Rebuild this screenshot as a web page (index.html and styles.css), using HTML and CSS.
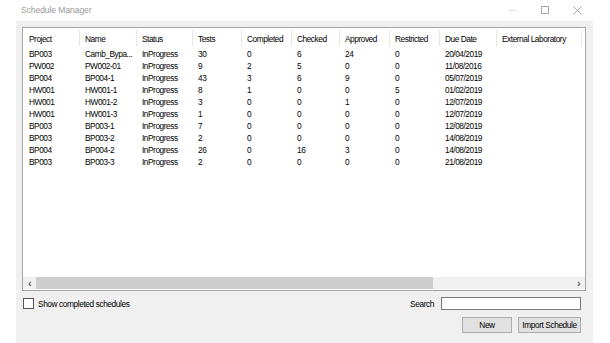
FILE: index.html
```html
<!DOCTYPE html>
<html lang="en">
<head>
  <meta charset="UTF-8" />
  <title>Schedule Manager</title>
  <link rel="stylesheet" href="styles.css">
</head>
<body>
  <div class="titlebar">
    <span class="title">Schedule Manager</span>
    <div class="controls">
      <span class="ctl min"></span>
      <span class="ctl max"></span>
      <svg class="ctl close" width="9" height="9" viewBox="0 0 9 9"><path d="M0.5 0.5L8.5 8.5M8.5 0.5L0.5 8.5" stroke="#9a9a9a" stroke-width="0.9" fill="none"/></svg>
    </div>
  </div>

  <div class="client">
    <div class="listview">
      <div class="row head">
        <span>Project</span><span>Name</span><span>Status</span><span>Tests</span><span>Completed</span><span>Checked</span><span>Approved</span><span>Restricted</span><span>Due Date</span><span>External Laboratory</span>
      </div>
      <div class="rows">
        <div class="row"><span>BP003</span><span>Camb_Bypa...</span><span>InProgress</span><span>30</span><span>0</span><span>6</span><span>24</span><span>0</span><span>20/04/2019</span><span></span></div>
        <div class="row"><span>PW002</span><span>PW002-01</span><span>InProgress</span><span>9</span><span>2</span><span>5</span><span>0</span><span>0</span><span>11/08/2016</span><span></span></div>
        <div class="row"><span>BP004</span><span>BP004-1</span><span>InProgress</span><span>43</span><span>3</span><span>6</span><span>9</span><span>0</span><span>05/07/2019</span><span></span></div>
        <div class="row"><span>HW001</span><span>HW001-1</span><span>InProgress</span><span>8</span><span>1</span><span>0</span><span>0</span><span>5</span><span>01/02/2019</span><span></span></div>
        <div class="row"><span>HW001</span><span>HW001-2</span><span>InProgress</span><span>3</span><span>0</span><span>0</span><span>1</span><span>0</span><span>12/07/2019</span><span></span></div>
        <div class="row"><span>HW001</span><span>HW001-3</span><span>InProgress</span><span>1</span><span>0</span><span>0</span><span>0</span><span>0</span><span>12/07/2019</span><span></span></div>
        <div class="row"><span>BP003</span><span>BP003-1</span><span>InProgress</span><span>7</span><span>0</span><span>0</span><span>0</span><span>0</span><span>12/08/2019</span><span></span></div>
        <div class="row"><span>BP003</span><span>BP003-2</span><span>InProgress</span><span>2</span><span>0</span><span>0</span><span>0</span><span>0</span><span>14/08/2019</span><span></span></div>
        <div class="row"><span>BP004</span><span>BP004-2</span><span>InProgress</span><span>26</span><span>0</span><span>16</span><span>3</span><span>0</span><span>14/08/2019</span><span></span></div>
        <div class="row"><span>BP003</span><span>BP003-3</span><span>InProgress</span><span>2</span><span>0</span><span>0</span><span>0</span><span>0</span><span>21/08/2019</span><span></span></div>
      </div>
      <div class="hscroll">
        <span class="arrow">&lsaquo;</span>
        <div class="track"><div class="thumb"></div></div>
        <span class="arrow">&rsaquo;</span>
      </div>
    </div>

    <div class="options">
      <label class="check"><span class="box"></span>Show completed schedules</label>
      <div class="search">
        <span>Search</span>
        <span class="field"></span>
      </div>
    </div>

    <div class="actions">
      <button class="btn new">New</button>
      <button class="btn">Import Schedule</button>
    </div>
    <div class="grip"></div>
  </div>
</body>
</html>
```

FILE: styles.css
```css
* {
  box-sizing: border-box;
}

body {
  margin: 0;
  background: #ffffff;
  font-family: 'Liberation Sans', Arial, sans-serif;
  height: 343px;
  overflow: hidden;
  display: flex;
  flex-direction: column;
}

.titlebar {
  height: 21px;
  display: flex;
  align-items: center;
  justify-content: space-between;
  padding: 0 0 1px 21px;
}

.title {
  font-size: 8.6px;
  color: #9a9a9a;
  letter-spacing: -0.1px;
}

.controls {
  display: flex;
  align-items: center;
  height: 100%;
}

.ctl {
  display: block;
}

.min {
  width: 7px;
  height: 1px;
  background: #dcdcdc;
  margin-right: 25px;
}

.max {
  width: 8px;
  height: 8px;
  border: 1px solid #a8a8a8;
  margin-right: 24px;
}

.close {
  margin-right: 28px;
}

.client {
  position: relative;
  flex: 1;
  margin: 0 17px 0 16px;
  background: #f0f0f0;
  padding: 6px 7px 0 6px;
  display: flex;
  flex-direction: column;
}

.listview {
  height: 264px;
  background: #ffffff;
  border: 1px solid #a5a5a5;
  display: flex;
  flex-direction: column;
  font-size: 8.3px;
  letter-spacing: -0.45px;
  color: #000;
}

.row {
  display: grid;
  grid-template-columns: 57px 57px 56px 49px 50px 48px 50px 50px 57px 85px;
  height: 12px;
  align-items: center;
}

.row span {
  padding-left: 5px;
  white-space: nowrap;
  overflow: hidden;
}

.row span:first-child {
  padding-left: 6px;
}

.row.head {
  height: 20px;
  padding-top: 2px;
  align-items: start;
}

.row.head span {
  height: 16px;
  line-height: 18px;
  border-right: 1px solid #e5e5e5;
}

.rows {
  flex: 1;
}

.hscroll {
  height: 12px;
  margin-bottom: 1px;
  display: flex;
  align-items: center;
  background: #f0f0f0;
}

.arrow {
  width: 13px;
  text-align: center;
  font-size: 11px;
  font-weight: bold;
  line-height: 12px;
  color: #606060;
}

.track {
  flex: 1;
  height: 100%;
}

.thumb {
  width: 397px;
  height: 100%;
  background: #cdcdcd;
}

.options {
  display: flex;
  justify-content: space-between;
  align-items: center;
  margin-top: 6px;
  height: 13px;
  font-size: 8.3px;
  letter-spacing: -0.4px;
  color: #000;
}

.check {
  display: flex;
  align-items: center;
  gap: 4px;
  padding-left: 1px;
}

.box {
  width: 11px;
  height: 11px;
  background: #ffffff;
  border: 1px solid #555;
}

.search {
  display: flex;
  align-items: center;
  gap: 7px;
  padding-right: 5px;
}

.field {
  width: 140px;
  height: 13px;
  background: #ffffff;
  border: 1px solid #7a7a7a;
}

.actions {
  display: flex;
  justify-content: flex-end;
  gap: 6px;
  margin-top: 7px;
  padding-right: 5px;
}

.btn {
  height: 16px;
  padding: 0;
  background: #e1e1e1;
  border: 1px solid #adadad;
  font-family: 'Liberation Sans', Arial, sans-serif;
  font-size: 8.3px;
  letter-spacing: -0.4px;
  color: #000;
  width: 63px;
}

.btn.new {
  width: 50px;
}

.grip {
  position: absolute;
  right: 2px;
  bottom: 3px;
  width: 5px;
  height: 5px;
  background-image: radial-gradient(#b8b8b8 0.6px, transparent 0.7px);
  background-size: 2px 2px;
}
```
